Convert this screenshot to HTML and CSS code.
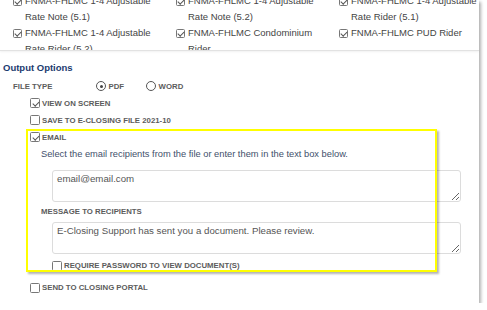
FILE: index.html
```html
<!DOCTYPE html>
<html lang="en">
<head>
  <meta charset="UTF-8" />
  <title>Output Options</title>
  <link rel="stylesheet" href="styles.css">
</head>
<body>
  <div class="panel">
    <div class="docs">
      <div class="docs-grid">
        <div class="doc"><span class="cb checked"></span><span>FNMA-FHLMC 1-4 Adjustable Rate Note (5.1)</span></div>
        <div class="doc"><span class="cb checked"></span><span>FNMA-FHLMC 1-4 Adjustable Rate Note (5.2)</span></div>
        <div class="doc"><span class="cb checked"></span><span>FNMA-FHLMC 1-4 Adjustable Rate Rider (5.1)</span></div>
        <div class="doc"><span class="cb checked"></span><span>FNMA-FHLMC 1-4 Adjustable Rate Rider (5.2)</span></div>
        <div class="doc"><span class="cb checked"></span><span>FNMA-FHLMC Condominium Rider</span></div>
        <div class="doc"><span class="cb checked"></span><span>FNMA-FHLMC PUD Rider</span></div>
      </div>
    </div>

    <section class="output">
      <h3>Output Options</h3>

      <div class="filetype">
        <span class="lbl">FILE TYPE</span>
        <span class="radio on"></span><span class="lbl opt-text">PDF</span>
        <span class="radio"></span><span class="lbl opt-text">WORD</span>
      </div>

      <div class="opt"><span class="cb checked"></span><span class="lbl">VIEW ON SCREEN</span></div>
      <div class="opt"><span class="cb"></span><span class="lbl">SAVE TO E-CLOSING FILE 2021-10</span></div>

      <div class="email">
        <div class="opt"><span class="cb checked"></span><span class="lbl">EMAIL</span></div>
        <p class="hint">Select the email recipients from the file or enter them in the text box below.</p>
        <textarea class="box">email@email.com</textarea>
        <div class="lbl sub">MESSAGE TO RECIPIENTS</div>
        <textarea class="box">E-Closing Support has sent you a document. Please review.</textarea>
        <div class="opt inner"><span class="cb"></span><span class="lbl">REQUIRE PASSWORD TO VIEW DOCUMENT(S)</span></div>
      </div>

      <div class="opt"><span class="cb"></span><span class="lbl">SEND TO CLOSING PORTAL</span></div>
    </section>
  </div>
</body>
</html>
```

FILE: styles.css
```css
body {
  margin: 0;
  background: #fff;
  font-family: "Liberation Sans", Arial, sans-serif;
}
.panel {
  width: 479px;
  background: #fff;
  box-shadow: 2px 2px 3px rgba(0, 0, 0, 0.3);
  padding-bottom: 7px;
}

/* document list (scrolled) */
.docs {
  height: 50px;
  overflow: hidden;
  border-bottom: 1px solid #e2e2e2;
  box-shadow: 0 1px 2px rgba(0, 0, 0, 0.06);
}
.docs-grid {
  display: grid;
  grid-template-columns: 163px 163px 150px;
  margin-top: -7px;
  padding-left: 13px;
  font-size: 9.5px;
  line-height: 16px;
  color: #444;
}
.doc {
  display: flex;
  align-items: flex-start;
}
.doc span:last-child {
  max-width: 128px;
}
.doc .cb {
  margin-top: 3.5px;
  margin-right: 3px;
}

/* checkbox + radio */
.cb {
  flex: none;
  display: inline-block;
  position: relative;
  width: 9px;
  height: 9px;
  border: 1px solid #777;
  border-radius: 1.5px;
  background: #fff;
  box-sizing: border-box;
}
.cb.checked::after {
  content: "";
  position: absolute;
  left: 2px;
  top: 0px;
  width: 2.5px;
  height: 5px;
  border: solid #555;
  border-width: 0 1px 1px 0;
  transform: rotate(45deg);
}
.radio {
  display: inline-block;
  position: relative;
  width: 10px;
  height: 10px;
  border: 1px solid #555;
  border-radius: 50%;
  box-sizing: border-box;
  margin-right: 2.5px;
}
.radio.on::after {
  content: "";
  position: absolute;
  left: 2.5px;
  top: 2.5px;
  width: 3px;
  height: 3px;
  border-radius: 50%;
  background: #444;
}

/* output options */
.output {
  padding-left: 3px;
}
.output h3 {
  margin: 11px 0 0;
  font-size: 9.5px;
  line-height: 12px;
  color: #1b3b6f;
}
.lbl {
  font-size: 7.8px;
  font-weight: bold;
  color: #5c5c5c;
}
.filetype {
  display: flex;
  align-items: center;
  height: 17px;
  margin-top: 3.5px;
  padding-left: 10px;
}
.filetype > .lbl:first-child {
  width: 83px;
}
.opt-text {
  margin-right: 22px;
}
.opt {
  display: flex;
  align-items: center;
  height: 17px;
  padding-left: 27px;
}
.opt .cb {
  width: 10px;
  height: 10px;
  margin-right: 2px;
}
.opt .cb.checked::after {
  left: 2.5px;
  top: 0.5px;
}

/* email block with highlight */
.email {
  position: relative;
}
.email::after {
  content: "";
  position: absolute;
  left: 23px;
  top: 0.5px;
  width: 411px;
  height: 143px;
  border: 2px solid #ffff00;
  box-sizing: border-box;
  box-shadow: 2px 2px 2px rgba(0, 0, 0, 0.3);
  pointer-events: none;
}
.hint {
  margin: 0;
  padding-left: 38px;
  height: 17px;
  line-height: 17px;
  font-size: 9.3px;
  color: #42506b;
}
.box {
  display: block;
  width: 409px;
  height: 32.5px;
  margin: 7px 0 0 49px;
  padding: 2px 4px;
  box-sizing: border-box;
  border: 1px solid #dcdcdc;
  border-radius: 3px;
  font-family: "Liberation Sans", Arial, sans-serif;
  font-size: 9.7px;
  line-height: 12px;
  color: #555;
  overflow: hidden;
}
.lbl.sub {
  display: block;
  margin: 3.5px 0 0 38px;
  line-height: 12px;
}
.lbl.sub + .box {
  margin-top: 4px;
}
.opt.inner {
  margin-top: 3px;
  padding-left: 49px;
}
.email + .opt {
  margin-top: 5px;
}
```
